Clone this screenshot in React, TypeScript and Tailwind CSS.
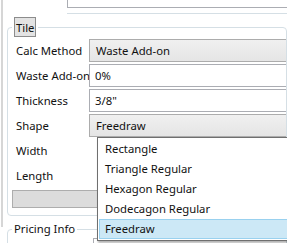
import React from "react";

const shapes = [
  "Rectangle",
  "Triangle Regular",
  "Hexagon Regular",
  "Dodecagon Regular",
  "Freedraw",
];

function Row({ label, children }: { label: string; children?: React.ReactNode }) {
  return (
    <div className="flex h-[23px] items-center">
      <div className="w-[81px] shrink-0 whitespace-nowrap pl-[8px] pt-[1px]">{label}</div>
      <div className="h-full flex-1">{children}</div>
    </div>
  );
}

function TextBox({ value }: { value: string }) {
  return (
    <div className="flex h-full items-center border border-[#abadb3] border-r-0 bg-white pl-[5px]">
      {value}
    </div>
  );
}

function Combo({ value }: { value: string }) {
  return (
    <div className="flex h-full items-center border border-[#acacac] border-r-0 bg-gradient-to-b from-[#f0f0f0] to-[#e5e5e5] pl-[6px]">
      {value}
    </div>
  );
}

export default function App() {
  const selected = "Freedraw";
  return (
    <div className="relative h-[243px] w-[287px] overflow-hidden bg-white font-['Noto_Sans',sans-serif] text-[11.3px] leading-none text-[#111]">
      <div className="ml-px h-full border-l-2 border-[#d6d6d6]">
        {/* Path row, mostly scrolled out of view */}
        <div className="mt-[-16px] flex h-[24px] items-center">
          <div className="w-[64px] shrink-0 pl-[14px]">Path</div>
          <div className="h-full flex-1 border-b border-l border-[#abadb3] bg-white" />
        </div>
        <div className="ml-[64px] mt-[5px] border-t border-[#d5dfe5]" />

        {/* Tile group */}
        <fieldset className="ml-[4px] mt-[3px] h-[199px] rounded-[4px] border border-[#d5dfe5] pb-[5px]">
          <legend className="ml-[4px] px-[2px]">
            <span className="block h-[20px] border border-[#8c8c8c] bg-[#e3e3e3] px-[1px] pt-[4px]">
              Tile
            </span>
          </legend>
          <div className="mt-[2px] flex flex-col gap-[2px]">
            <Row label="Calc Method">
              <Combo value="Waste Add-on" />
            </Row>
            <Row label="Waste Add-on">
              <TextBox value="0%" />
            </Row>
            <Row label="Thickness">
              <TextBox value={'3/8"'} />
            </Row>
            <Row label="Shape">
              <Combo value={selected} />
            </Row>
            <Row label="Width" />
            <Row label="Length" />
          </div>
          <div className="mx-[4px] mt-[3px] h-[18px] border border-[#adadad] bg-[#dcdcdc]" />
        </fieldset>

        {/* Pricing Info group */}
        <fieldset className="ml-[4px] mt-[5px] h-[40px] rounded-[4px] border border-[#d5dfe5]">
          <legend className="ml-[4px] px-[2px] leading-[16px]">Pricing Info</legend>
          <div className="ml-[85px] mt-[1px] h-[20px] border-l border-t border-[#abadb3]" />
        </fieldset>
      </div>

      {/* Open Shape dropdown */}
      <div className="absolute left-[97px] top-[137px] w-[200px] border border-[#6f6f6f] bg-white p-px shadow-[1px_2px_2px_rgba(0,0,0,0.3)]">
        {shapes.map((s) => (
          <div
            key={s}
            className={
              s === selected
                ? "flex h-[20px] items-center border border-[#99d1ef] bg-[#cce8f6] pl-[5px]"
                : "flex h-[20px] items-center border border-transparent pl-[5px]"
            }
          >
            {s}
          </div>
        ))}
      </div>
    </div>
  );
}
